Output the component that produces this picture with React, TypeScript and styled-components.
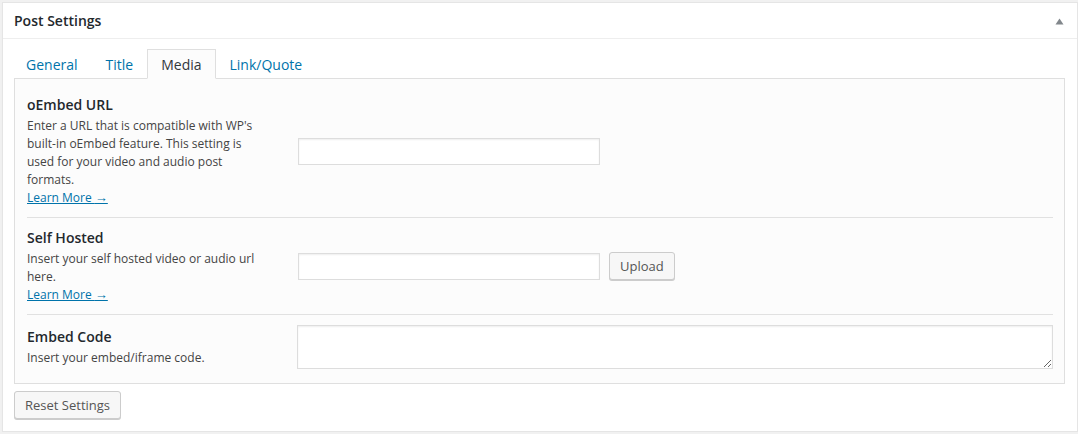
import React from 'react';
import styled, { createGlobalStyle } from 'styled-components';

const GlobalStyle = createGlobalStyle`
  html, body {
    margin: 0;
    padding: 0;
    background: #f1f1f1;
  }
  body {
    font-family: "Open Sans", "Liberation Sans", sans-serif;
    color: #444;
    font-size: 13px;
  }
  * {
    box-sizing: border-box;
  }
`;

const Postbox = styled.div`
  margin: 2px 0 0 2px;
  width: 1076px;
  background: #fff;
  border: 1px solid #e5e5e5;
  box-shadow: 0 1px 1px rgba(0, 0, 0, 0.04);
  display: flex;
  flex-direction: column;
`;

const Header = styled.div`
  height: 36px;
  flex-shrink: 0;
  border-bottom: 1px solid #eee;
  display: flex;
  align-items: center;
  justify-content: space-between;
  padding: 0 10px 0 11px;
`;

const HeaderTitle = styled.h2`
  margin: 0;
  font-size: 14px;
  font-weight: 600;
  color: #23282d;
  line-height: 1.4;
`;

const Toggle = styled.button`
  border: none;
  background: none;
  padding: 0;
  width: 16px;
  height: 16px;
  margin-top: 2px;
  display: flex;
  align-items: center;
  justify-content: center;
  cursor: pointer;
`;

const Inside = styled.div`
  padding: 10px 12px 12px 11px;
  display: flex;
  flex-direction: column;
  align-items: flex-start;
`;

const TabList = styled.div`
  display: flex;
  margin: 0 0 -1px -2px;
  position: relative;
  z-index: 1;
`;

const Tab = styled.a<{ $active?: boolean }>`
  display: block;
  padding: 6px 13px 4px;
  line-height: 18px;
  font-size: 14px;
  text-decoration: none;
  border: 1px solid ${({ $active }) => ($active ? '#dfdfdf' : 'transparent')};
  border-bottom-color: ${({ $active }) => ($active ? '#fcfcfc' : 'transparent')};
  background: ${({ $active }) => ($active ? '#fcfcfc' : 'transparent')};
  color: ${({ $active }) => ($active ? '#32373c' : '#0073aa')};
  cursor: pointer;
`;

const Panel = styled.div`
  width: 100%;
  border: 1px solid #dfdfdf;
  background: #fcfcfc;
  padding: 6px 11px 4px 12px;
`;

const Row = styled.div<{ $last?: boolean }>`
  display: grid;
  grid-template-columns: 270px 1fr;
  align-items: center;
  padding: 10px 0;
  border-bottom: ${({ $last }) => ($last ? 'none' : '1px solid #e1e1e1')};
`;

const Label = styled.div`
  max-width: 236px;
`;

const FieldTitle = styled.h4`
  margin: 0 0 2px;
  font-size: 14px;
  font-weight: 600;
  line-height: 20px;
  color: #23282d;
`;

const Description = styled.p`
  margin: 0;
  font-size: 12px;
  line-height: 18px;
  color: #444;
`;

const LearnMore = styled.a`
  display: block;
  width: fit-content;
  color: #0073aa;
  text-decoration: underline;
  font-size: 12px;
  line-height: 18px;
`;

const Arrow = styled.span`
  font-family: "Liberation Sans", sans-serif;
  font-size: 13px;
`;

const Field = styled.div`
  display: flex;
  align-items: center;
  gap: 9px;
`;

const TextInput = styled.input`
  width: 302px;
  height: 27px;
  margin-left: 1px;
  border: 1px solid #ddd;
  background: #fff;
  box-shadow: inset 0 1px 2px rgba(0, 0, 0, 0.07);
  font-family: inherit;
  font-size: 13px;
  padding: 3px 5px;
  outline: none;
`;

const TextArea = styled.textarea`
  width: 100%;
  height: 44px;
  display: block;
  border: 1px solid #ddd;
  background: #fff;
  box-shadow: inset 0 1px 2px rgba(0, 0, 0, 0.07);
  font-family: inherit;
  font-size: 13px;
  padding: 3px 5px;
  outline: none;
`;

const Button = styled.button`
  height: 28px;
  padding: 0 10px 1px;
  font-family: inherit;
  font-size: 13px;
  line-height: 26px;
  color: #555;
  background: #f7f7f7;
  border: 1px solid #ccc;
  border-radius: 3px;
  box-shadow: 0 1px 0 #ccc;
  cursor: pointer;
  white-space: nowrap;
`;

const ResetButton = styled(Button)`
  margin-top: 7px;
  width: 107px;
`;

const tabs = ['General', 'Title', 'Media', 'Link/Quote'];

const Learn = () => (
  <LearnMore>Learn More <Arrow>→</Arrow></LearnMore>
);

export default function App() {
  return (
    <>
      <GlobalStyle />
      <Postbox>
        <Header>
          <HeaderTitle>Post Settings</HeaderTitle>
          <Toggle aria-label="Toggle panel">
            <svg width="9" height="7" viewBox="0 0 9 7">
              <path d="M4.5 0.5 L8.5 6.5 L0.5 6.5 Z" fill="#82878c" />
            </svg>
          </Toggle>
        </Header>
        <Inside>
          <TabList>
            {tabs.map((t) => (
              <Tab key={t} $active={t === 'Media'}>{t}</Tab>
            ))}
          </TabList>
          <Panel>
            <Row>
              <Label>
                <FieldTitle>oEmbed URL</FieldTitle>
                <Description>
                  Enter a URL that is compatible with WP's built-in oEmbed feature. This setting is used for your video and audio post formats.
                </Description>
                <Learn />
              </Label>
              <Field>
                <TextInput type="text" />
              </Field>
            </Row>
            <Row>
              <Label>
                <FieldTitle>Self Hosted</FieldTitle>
                <Description>Insert your self hosted video or audio url here.</Description>
                <Learn />
              </Label>
              <Field>
                <TextInput type="text" />
                <Button>Upload</Button>
              </Field>
            </Row>
            <Row $last>
              <Label>
                <FieldTitle>Embed Code</FieldTitle>
                <Description>Insert your embed/iframe code.</Description>
              </Label>
              <Field>
                <TextArea />
              </Field>
            </Row>
          </Panel>
          <ResetButton>Reset Settings</ResetButton>
        </Inside>
      </Postbox>
    </>
  );
}
